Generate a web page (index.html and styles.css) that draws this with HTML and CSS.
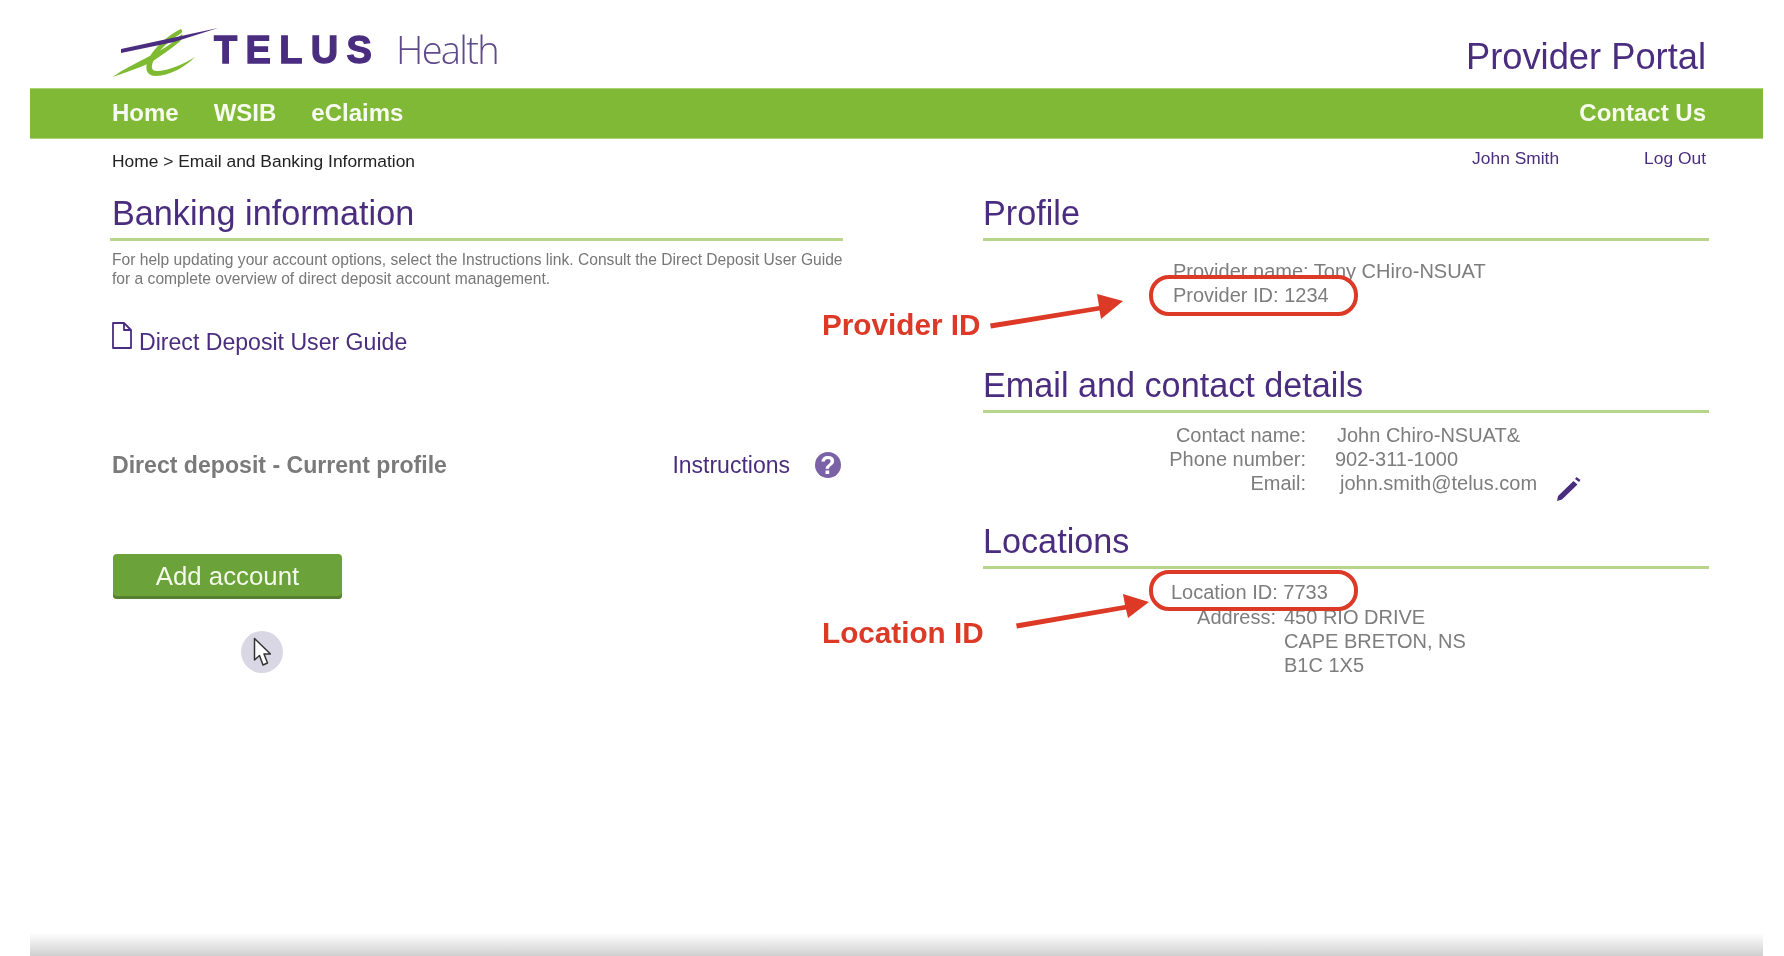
FILE: index.html
```html
<!DOCTYPE html>
<html lang="en">
<head>
<meta charset="utf-8">
<title>Provider Portal</title>
<link rel="stylesheet" href="styles.css">
</head>
<body>
<div class="page">
  <header class="masthead">
    <div class="logo">
      <svg class="logo-mark" viewBox="0 0 106 50" width="106" height="50" aria-hidden="true">
        <path class="mark-green" d="M0.500 49C12 41 24 35 34 30C48 23 60 16 70 6C71 10 69 13 66 15C56 23 47 29 38 35C24 41 12 45 0.500 49Z"/>
        <path class="mark-green" d="M69 1C71 3 70 5 68 6C58 12 48 21 43 30C38 38 39 44 46 43C58 42 72 36 83 29C74 38 58 48 44 48C34 48 32 40 37 30C43 19 56 7 69 1Z"/>
        <path class="mark-purple" d="M9 21L106 0L62 14L9 25Z"/>
      </svg>
      <span class="logo-telus">TELUS</span>
      <span class="logo-health">Health</span>
    </div>
    <div class="portal-title">Provider Portal</div>
  </header>

  <nav class="mainnav">
    <div class="mainnav-links">
      <a>Home</a>
      <a>WSIB</a>
      <a>eClaims</a>
    </div>
    <a>Contact Us</a>
  </nav>

  <div class="subnav">
    <div class="breadcrumb">Home &gt; Email and Banking Information</div>
    <div class="usernav">
      <a>John Smith</a>
      <a>Log Out</a>
    </div>
  </div>

  <main class="columns">
    <section class="col col-left">
      <h2 class="section-title">Banking information</h2>
      <p class="help">For help updating your account options, select the Instructions link. Consult the Direct Deposit User Guide<br>for a complete overview of direct deposit account management.</p>
      <div class="guide">
        <svg class="doc-icon" viewBox="0 0 20 27" width="20" height="27" aria-hidden="true">
          <path d="M1 1H12L19 8V26H1ZM12 1V8H19"/>
        </svg>
        <a class="guide-link">Direct Deposit User Guide</a>
      </div>
      <div class="deposit-row">
        <strong class="deposit-title">Direct deposit - Current profile</strong>
        <div class="instructions">
          <a>Instructions</a>
          <span class="help-badge">?</span>
        </div>
      </div>
      <button class="btn-add" type="button">Add account</button>
    </section>

    <section class="col">
      <h2 class="section-title">Profile</h2>
      <div class="profile-lines">
        <div>Provider name: Tony CHiro-NSUAT</div>
        <div>Provider ID: 1234</div>
      </div>

      <h2 class="section-title section-title-contact">Email and contact details</h2>
      <div class="contact">
        <div class="contact-label">Contact name:</div>
        <div class="contact-value contact-name">John Chiro-NSUAT&amp;</div>
        <div class="contact-label">Phone number:</div>
        <div class="contact-value contact-phone">902-311-1000</div>
        <div class="contact-label">Email:</div>
        <div class="contact-value contact-email">
          john.smith@telus.com
          <svg class="pencil" viewBox="0 0 27 27" width="27" height="27" aria-hidden="true">
            <path d="M21.500 2L25.500 5L24 7L20 4ZM18.500 6L22.500 9.500L7 24.500L2 26L3 21Z"/>
          </svg>
        </div>
      </div>

      <h2 class="section-title section-title-locations">Locations</h2>
      <div class="location-id">Location ID: 7733</div>
      <div class="address">
        <div class="address-label">Address:</div>
        <div class="address-value">450 RIO DRIVE<br>CAPE BRETON, NS<br>B1C 1X5</div>
      </div>
    </section>
  </main>

  <div class="footer-shade"></div>
</div>

<div class="cursor-spot">
  <svg viewBox="0 0 18 30" width="18" height="30" aria-hidden="true">
    <path d="M1.500 1.500V23L6.500 18.500L10 28L14.500 26L11 17H17.500Z"/>
  </svg>
</div>

<div class="callout callout-provider"></div>
<div class="callout callout-location"></div>
<div class="callout-label callout-label-provider">Provider ID</div>
<div class="callout-label callout-label-location">Location ID</div>
<svg class="callout-arrows" viewBox="0 0 1784 956" width="1784" height="956" aria-hidden="true">
  <path d="M990 323.500L1099 306L1097 294L1123 301L1101 319L1099.500 310.500L991 328.500Z"/>
  <path d="M1016 623.500L1125 605L1123 594L1149 602L1128 618L1126 609.500L1017 628.500Z"/>
</svg>
</body>
</html>
```
FILE: styles.css
```css
* {
  box-sizing: border-box;
}

html,
body {
  margin: 0;
  height: 100%;
  background: #fff;
}

body {
  position: relative;
  overflow: hidden;
  font-family: "Liberation Sans", Arial, sans-serif;
  color: #7d7d7d;
  filter: blur(0.4px);
}

.page {
  display: flex;
  flex-direction: column;
  width: 1733px;
  height: 956px;
  margin-left: 30px;
}

/* Masthead */
.masthead {
  display: flex;
  justify-content: space-between;
  height: 88px;
  padding: 0 57px 0 82px;
}

.logo {
  display: flex;
  align-items: flex-start;
  padding-top: 28px;
}

.logo-mark {
  flex: none;
}

.mark-green {
  fill: #7fbb32;
}

.mark-purple {
  fill: #4b2d7f;
}

.logo-telus {
  margin: 0 0 0 -4px;
  font-size: 38px;
  line-height: 44px;
  font-weight: 700;
  letter-spacing: 8.300px;
  color: #4b2d7f;
  -webkit-text-stroke: 1.300px #4b2d7f;
}

.logo-health {
  margin: -2px 0 0 16px;
  font-family: "Open Sans", sans-serif;
  font-size: 38px;
  line-height: 46px;
  font-weight: 300;
  letter-spacing: -1.700px;
  color: #5f4b8b;
}

.portal-title {
  padding-top: 37px;
  font-size: 36.300px;
  line-height: 40px;
  color: #4b2d7f;
}

/* Main navigation */
.mainnav {
  display: flex;
  justify-content: space-between;
  align-items: center;
  height: 51px;
  padding: 0 57px 2px 82px;
  background: #80b936;
  border-top: 1px solid #a9d374;
  border-bottom: 1px solid #a9d374;
  font-size: 24px;
  font-weight: 700;
  color: #f7fbef;
}

.mainnav-links {
  display: flex;
  gap: 35px;
}

/* Breadcrumb row */
.subnav {
  display: flex;
  justify-content: space-between;
  height: 34px;
  padding: 11px 57px 0 82px;
  font-size: 17.400px;
  line-height: 22px;
}

.breadcrumb {
  color: #222;
}

.usernav {
  display: flex;
  gap: 85px;
  margin-top: -3px;
  color: #4b2d7f;
}

/* Two columns */
.columns {
  display: grid;
  grid-template-columns: 733px 726px;
  column-gap: 140px;
  padding: 20px 0 0 80px;
}

.section-title {
  margin: 0;
  padding: 0 0 5px;
  border-bottom: 3px solid #b7d68c;
  font-size: 34.200px;
  line-height: 40px;
  font-weight: 400;
  color: #4b2d7f;
}

.col-left .section-title {
  padding-left: 2px;
}

.section-title-contact {
  margin-top: 58px;
}

.section-title-locations {
  margin-top: 26px;
}

/* Left column */
.help {
  margin: 10px 0 0 2px;
  font-size: 15.620px;
  line-height: 18.500px;
  white-space: nowrap;
  color: #777;
}

.guide {
  display: flex;
  align-items: flex-start;
  gap: 7px;
  margin: 34px 0 0 2px;
}

.doc-icon path {
  fill: none;
  stroke: #4b2d7f;
  stroke-width: 1.800;
  stroke-linejoin: round;
}

.guide-link {
  margin-top: 7px;
  font-size: 23.100px;
  line-height: 26px;
  color: #4b2d7f;
}

.deposit-row {
  display: flex;
  justify-content: space-between;
  align-items: center;
  height: 28px;
  margin-top: 96px;
  padding: 0 2px;
}

.deposit-title {
  font-size: 23.100px;
  color: #7a7a7a;
}

.instructions {
  display: flex;
  align-items: center;
  gap: 25px;
  font-size: 23px;
  color: #4b2d7f;
}

.help-badge {
  width: 26px;
  height: 26px;
  border-radius: 50%;
  background: #7b62a6;
  color: #fff;
  font-size: 25px;
  line-height: 26px;
  font-weight: 700;
  text-align: center;
}

.btn-add {
  display: block;
  width: 229px;
  height: 45px;
  margin: 75px 0 0 3px;
  padding: 0;
  border: 0;
  border-radius: 4px;
  background: #6ba239;
  box-shadow: inset 0 -3px 0 #567f31;
  font-family: inherit;
  font-size: 25.800px;
  color: #f3f8ea;
}

/* Right column */
.profile-lines {
  margin-top: 18px;
  padding-left: 190px;
  font-size: 20px;
  line-height: 24px;
}

.contact {
  display: grid;
  grid-template-columns: 323px 1fr;
  grid-auto-rows: 24px;
  margin-top: 10px;
  font-size: 20px;
  line-height: 24px;
}

.contact-label {
  text-align: right;
}

.contact-value {
  display: flex;
}

.contact-name {
  padding-left: 31px;
}

.contact-phone {
  padding-left: 29px;
}

.contact-email {
  padding-left: 34px;
  white-space: nowrap;
}

.pencil {
  flex: none;
  margin: 4px 0 -7px 18px;
  fill: #4b2d7f;
}

.location-id {
  margin-top: 11px;
  padding-left: 188px;
  font-size: 20px;
  line-height: 24px;
}

.address {
  display: grid;
  grid-template-columns: 293px 1fr;
  column-gap: 8px;
  margin-top: 1px;
  font-size: 20px;
  line-height: 24px;
}

.address-label {
  text-align: right;
}

/* Footer */
.footer-shade {
  height: 23px;
  margin-top: auto;
  background: linear-gradient(#fff, #cfcfcf);
}

/* Recording overlays */
.cursor-spot {
  position: absolute;
  left: 241px;
  top: 631px;
  display: flex;
  justify-content: center;
  align-items: center;
  width: 42px;
  height: 42px;
  border-radius: 50%;
  background: #dad7e5;
}

.cursor-spot path {
  fill: #fff;
  stroke: #333;
  stroke-width: 1.500;
  stroke-linejoin: round;
}

.callout {
  position: absolute;
  left: 1149px;
  width: 209px;
  height: 41px;
  border: 4.500px solid #dc3a26;
  border-radius: 20px;
}

.callout-provider {
  top: 275px;
}

.callout-location {
  top: 570px;
}

.callout-label {
  position: absolute;
  left: 822px;
  font-size: 29.700px;
  line-height: 34px;
  font-weight: 700;
  color: #dc3a26;
}

.callout-label-provider {
  top: 308px;
}

.callout-label-location {
  top: 616px;
}

.callout-arrows {
  position: absolute;
  left: 0;
  top: 0;
  fill: #dc3a26;
  pointer-events: none;
}
```
